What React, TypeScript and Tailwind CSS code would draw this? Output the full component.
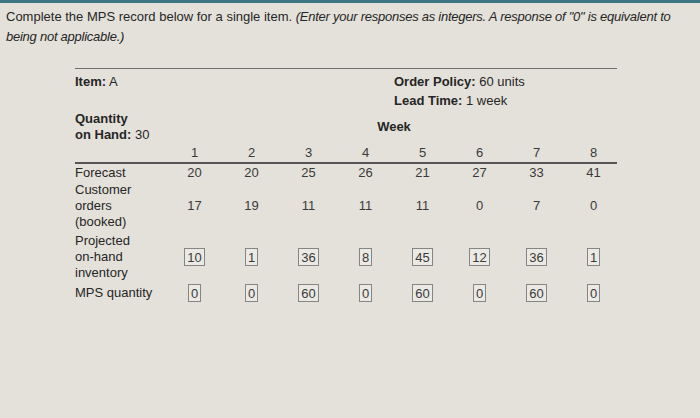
import React from 'react';

const weeks = [1, 2, 3, 4, 5, 6, 7, 8];
const forecast = [20, 20, 25, 26, 21, 27, 33, 41];
const booked = [17, 19, 11, 11, 11, 0, 7, 0];
const projected = [10, 1, 36, 8, 45, 12, 36, 1];
const mps = [0, 0, 60, 0, 60, 0, 60, 0];

const Box = ({ value }: { value: number }) => (
  <span className="inline-flex h-[18px] min-w-[10px] items-center justify-center border-[1.5px] border-[#858585] bg-[#ebe9e4] px-[2px] leading-none">
    {value}
  </span>
);

const Cells = ({ values, boxed = false }: { values: number[]; boxed?: boolean }) => (
  <>
    {values.map((v, i) => (
      <div key={i} className="w-[57px] text-center text-[#3a3a3a]">
        {boxed ? <Box value={v} /> : v}
      </div>
    ))}
  </>
);

export default function App() {
  return (
    <div className="h-[418px] w-[700px] overflow-hidden bg-[#e4e1da] text-[#262626]" style={{ fontFamily: '"Liberation Sans", Arial, sans-serif' }}>
      <div className="h-[3px] bg-[#3d7585]" />

      <p className="w-[690px] px-[6px] pt-[4px] text-[13px] leading-[20px]">
        Complete the MPS record below for a single item.{' '}
        <i className="tracking-[-0.25px]">(Enter your responses as integers. A response of "0" is equivalent to being not applicable.)</i>
      </p>

      <div className="ml-[75px] mt-[21px] w-[547px] text-[13px]">
        <div className="w-[542px] border-t-[1.5px] border-[#6e6e6e]" />

        {/* item + policies */}
        <div className="flex pt-[3px] leading-[19px]">
          <div className="w-[319px]">
            <b>Item:</b> A
          </div>
          <div>
            <div><b>Order Policy:</b> 60 units</div>
            <div><b>Lead Time:</b> 1 week</div>
          </div>
        </div>

        {/* quantity on hand + week */}
        <div className="mt-[1px] flex items-center leading-[16px]">
          <div className="w-[91px]">
            <b>Quantity</b>
            <br />
            <b>on Hand:</b> 30
          </div>
          <div className="w-[456px] text-center font-bold">Week</div>
        </div>

        <div className="mt-[2px] flex w-[547px] pb-[1px] leading-[16px]">
          <div className="w-[91px]" />
          <Cells values={weeks} />
        </div>
        <div className="w-[542px] border-t-[2px] border-[#555]" />

        <div className="flex items-center pt-[1px] leading-[16px]">
          <div className="w-[91px]">Forecast</div>
          <Cells values={forecast} />
        </div>

        <div className="flex items-center pt-[1px] leading-[16px]">
          <div className="w-[91px]">
            Customer
            <br />
            orders
            <br />
            (booked)
          </div>
          <Cells values={booked} />
        </div>

        <div className="flex items-center pt-[3px] leading-[16px]">
          <div className="w-[91px]">
            Projected
            <br />
            on-hand
            <br />
            inventory
          </div>
          <Cells values={projected} boxed />
        </div>

        <div className="flex items-center pt-[3px] leading-[18px]">
          <div className="w-[91px]">MPS quantity</div>
          <Cells values={mps} boxed />
        </div>
      </div>
    </div>
  );
}
